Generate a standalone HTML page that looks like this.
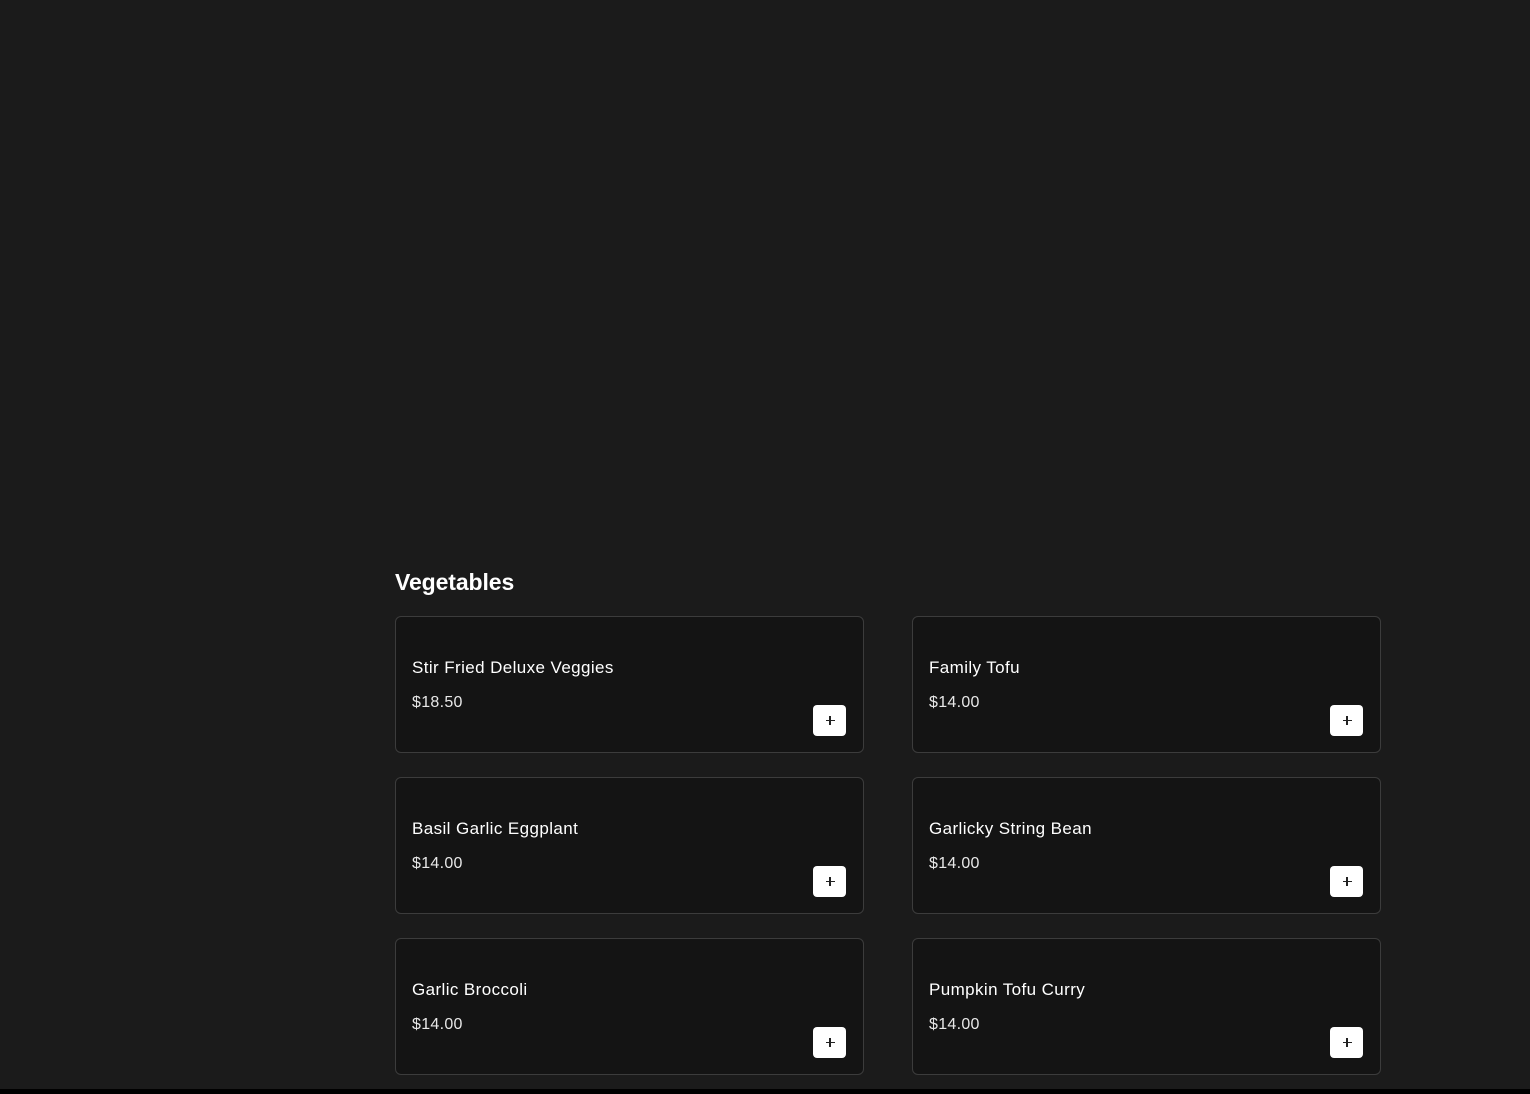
<!DOCTYPE html>
<html><head><meta charset="utf-8"><style>
html,body{margin:0;padding:0}
body{width:1530px;height:1094px;background:#1b1b1b;position:relative;overflow:hidden;font-family:"Liberation Sans",sans-serif;color:#fff}
h2{position:absolute;left:395px;top:569px;margin:0;font-size:23px;font-weight:bold;letter-spacing:-0.1px}
.card{position:absolute;width:467px;height:135px;background:#141414;border:1px solid #3c3c3c;border-radius:6px;box-sizing:content-box}
.name{position:absolute;left:16px;top:41px;font-size:17px;color:#fff;letter-spacing:0.4px}
.price{position:absolute;left:16px;top:77px;font-size:16px;color:#e8e8e8;letter-spacing:0.3px}
.btn{position:absolute;left:417px;top:88px;width:33px;height:31px;background:#fff;border-radius:4px}
.btn:before{content:"";position:absolute;left:12.5px;top:15px;width:9px;height:1.2px;background:#222}
.btn:after{content:"";position:absolute;left:16.4px;top:11px;width:1.2px;height:9px;background:#222}
.bar{position:absolute;left:0;top:1089px;width:1530px;height:5px;background:#000}
</style></head><body>
<h2>Vegetables</h2>
<div class="card" style="left:395px;top:616px"><div class="name">Stir Fried Deluxe Veggies</div><div class="price">$18.50</div><div class="btn"></div></div>
<div class="card" style="left:912px;top:616px"><div class="name">Family Tofu</div><div class="price">$14.00</div><div class="btn"></div></div>
<div class="card" style="left:395px;top:777px"><div class="name">Basil Garlic Eggplant</div><div class="price">$14.00</div><div class="btn"></div></div>
<div class="card" style="left:912px;top:777px"><div class="name">Garlicky String Bean</div><div class="price">$14.00</div><div class="btn"></div></div>
<div class="card" style="left:395px;top:938px"><div class="name">Garlic Broccoli</div><div class="price">$14.00</div><div class="btn"></div></div>
<div class="card" style="left:912px;top:938px"><div class="name">Pumpkin Tofu Curry</div><div class="price">$14.00</div><div class="btn"></div></div>
<div class="bar"></div>
</body></html>
